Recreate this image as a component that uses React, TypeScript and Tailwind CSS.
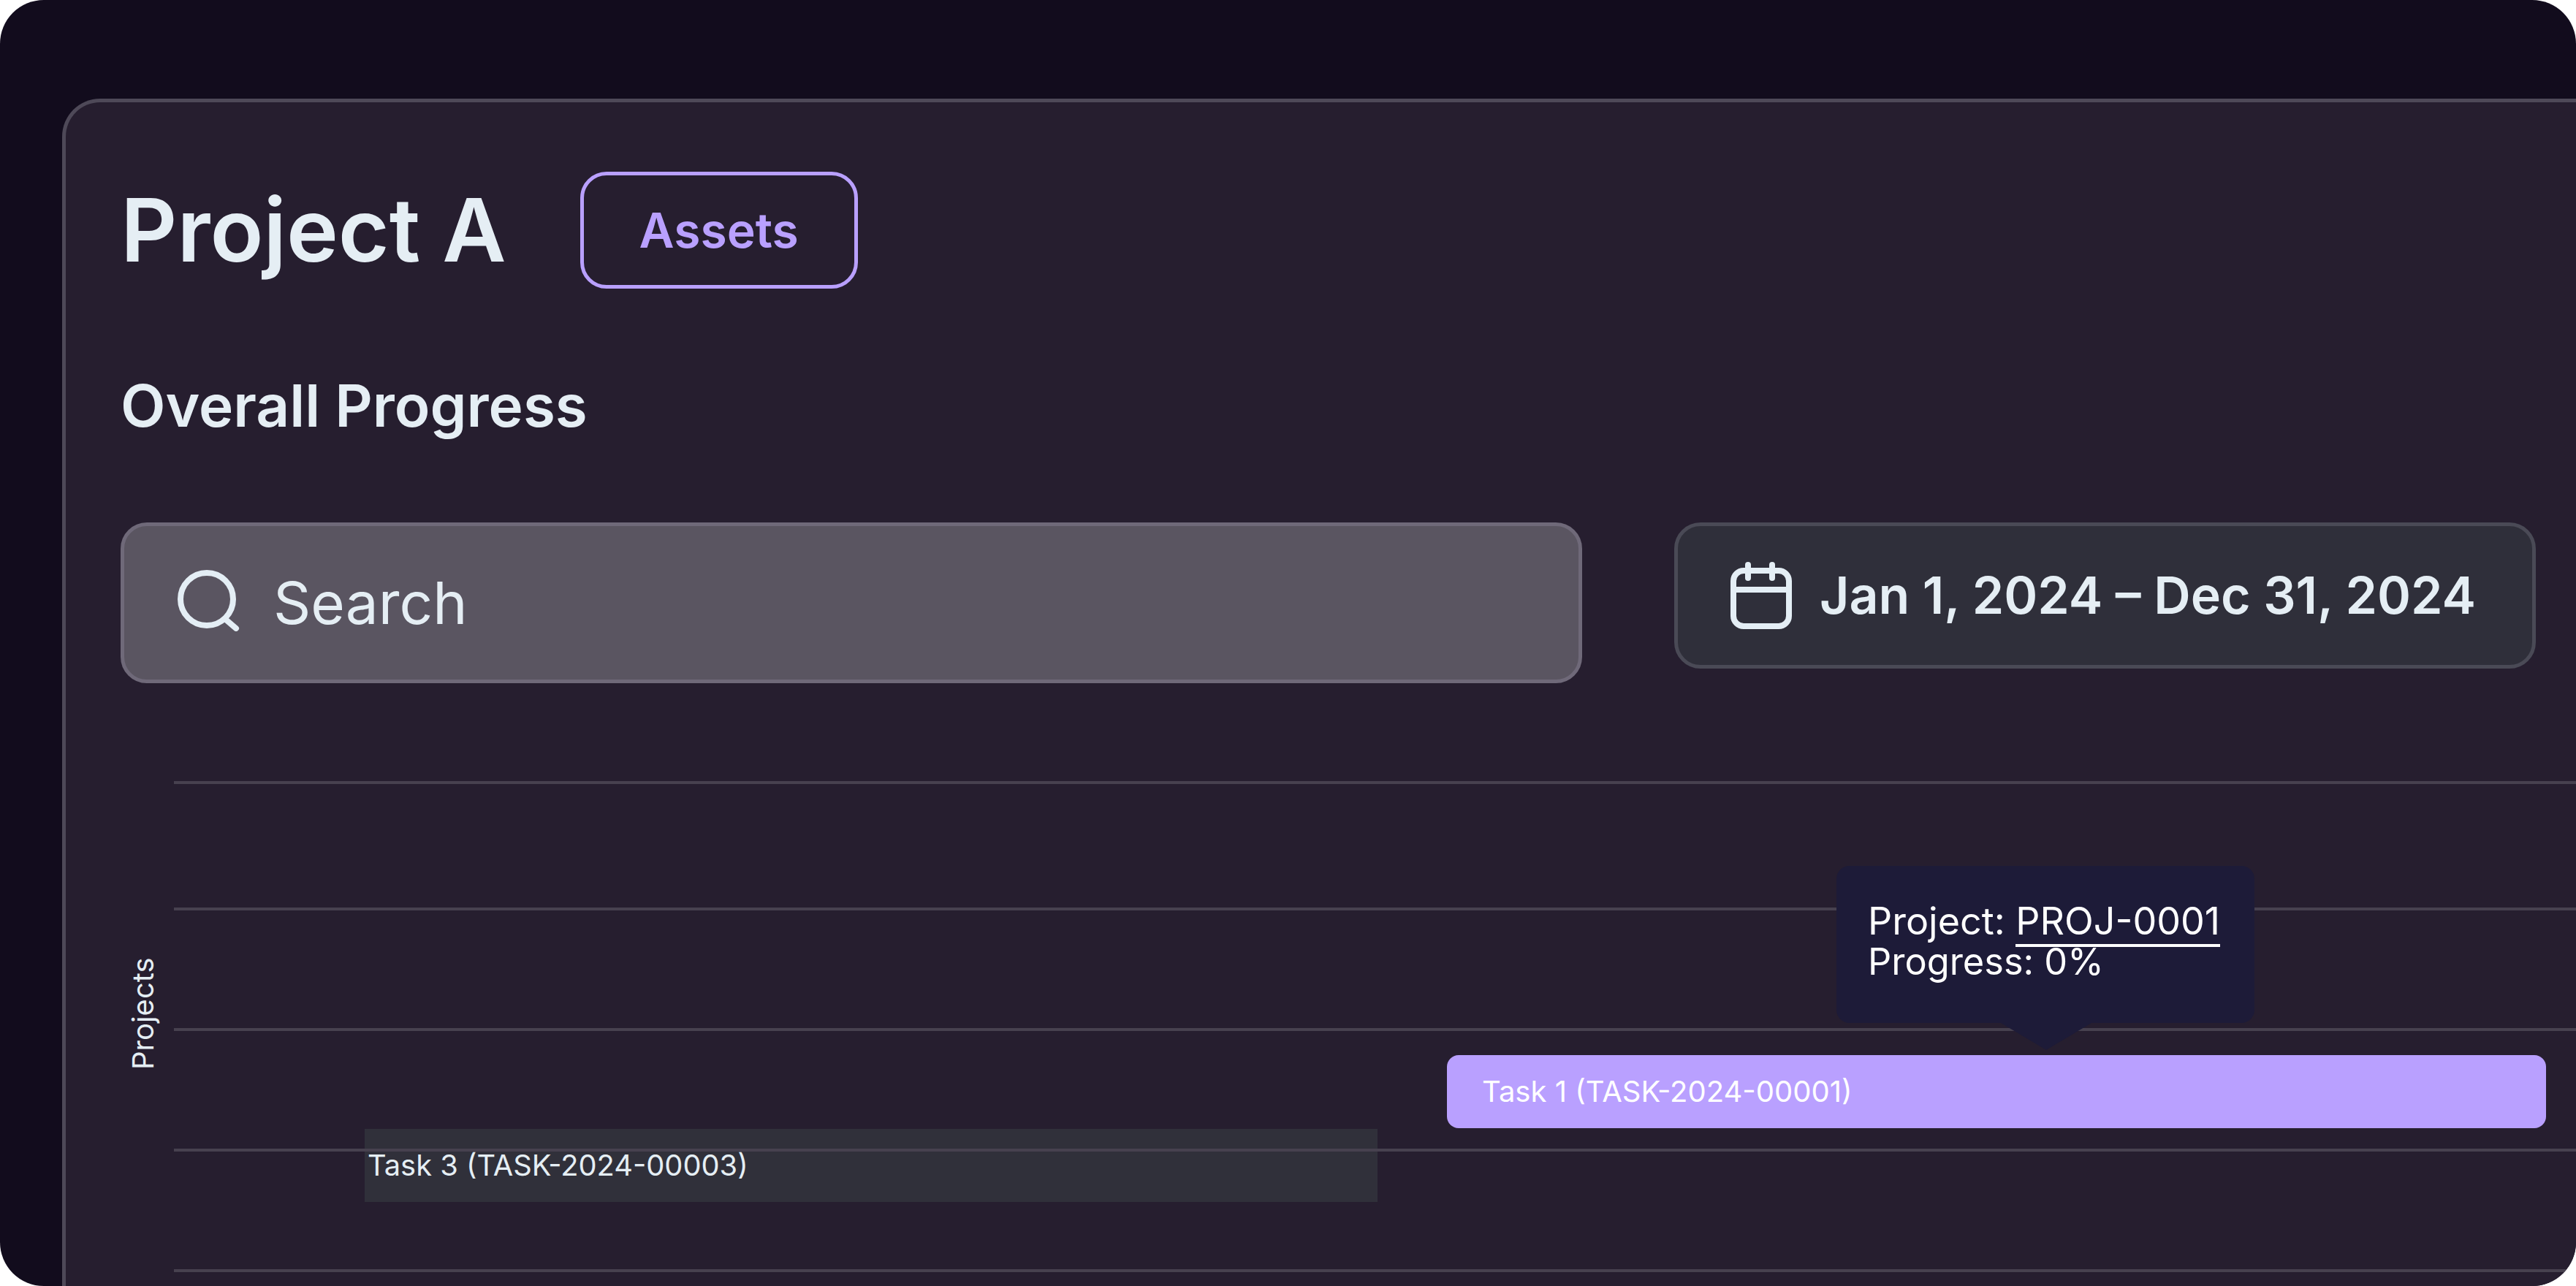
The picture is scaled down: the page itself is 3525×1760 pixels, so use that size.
const font = { fontFamily: "Inter, 'Noto Sans', sans-serif" };

const SearchIcon = () => (
  <svg viewBox="0 0 85 84" className="w-[85px] h-[84px] shrink-0 -mt-[6px]" fill="none" stroke="#E4EEF5" strokeWidth="8" strokeLinecap="round">
    <circle cx="40" cy="40" r="36" />
    <path d="M66 68 L80 80" />
  </svg>
);

const CalendarIcon = () => (
  <svg viewBox="0 0 84 92" className="w-[84px] h-[92px] shrink-0" fill="none" stroke="#E4EEF5" strokeWidth="8" strokeLinecap="round">
    <rect x="4" y="12" width="76" height="76" rx="14" />
    <path d="M4 38 H80" />
    <path d="M24 4 V22" />
    <path d="M57 4 V22" />
  </svg>
);

export default function App() {
  return (
    <div className="w-[3525px] h-[1760px] bg-white overflow-hidden" style={font}>
      <div className="h-full rounded-[60px] bg-[#120c1d] pl-[85px] pt-[135px] overflow-hidden">
        <div className="h-[1700px] rounded-tl-[52px] border-l-[5px] border-t-[5px] border-[#4e4958] bg-[#261e2f] pl-[75px] pt-[95px]">
          <div className="flex items-center h-[160px]">
            <h1 className="text-[120px] leading-none font-semibold text-[#e5eef4]">Project A</h1>
            <button className="ml-[101px] w-[380px] h-[160px] rounded-[36px] border-[5px] border-[#b9a0ff] text-[66px] font-semibold text-[#b9a0ff]">
              Assets
            </button>
          </div>

          <h2 className="mt-[114px] text-[80px] leading-[92px] font-semibold text-[#e5eef4]">Overall Progress</h2>

          <div className="mt-[114px] flex items-start gap-[126px]">
            <div className="w-[2000px] h-[220px] rounded-[36px] border-[5px] border-[#6f6979] bg-[#5a5561] flex items-center pl-[73px] gap-[46px]">
              <SearchIcon />
              <span className="text-[80px] font-normal text-[#e5eef4]">Search</span>
            </div>
            <div className="w-[1179px] h-[200px] rounded-[36px] border-[5px] border-[#4a4a56] bg-[#2f2f3a] flex items-center pl-[72px] gap-[38px]">
              <CalendarIcon />
              <span className="text-[69.8px] font-semibold text-[#e5eef4] whitespace-nowrap">Jan 1, 2024 – Dec 31, 2024</span>
            </div>
          </div>

          <div className="relative mt-[134px] ml-[73px] h-[680px] flex flex-col gap-[161px]">
            <div className="h-[4px] mb-[8px] bg-[#47414f]" />
            <div className="h-[4px] bg-[#47414f]" />
            <div className="h-[4px] bg-[#47414f]" />
            <div className="h-[4px] bg-[#47414f] relative z-10" />
            <div className="h-[4px] bg-[#47414f]" />

            <span className="absolute left-[-62px] top-[242px] h-[153px] [writing-mode:vertical-rl] rotate-180 text-[40px] leading-none text-[#e5eef4]">
              Projects
            </span>

            <div className="absolute left-[261px] top-[476px] w-[1386px] h-[100px] bg-[#30303a] flex items-center pl-[4px] text-[39.8px] text-[#e5eef4]">
              Task 3 (TASK-2024-00003)
            </div>

            <div className="absolute left-[1742px] top-[375px] w-[1504px] h-[100px] rounded-[16px] bg-[#b9a0ff] flex items-center pl-[48px] text-[40px] text-white">
              Task 1 (TASK-2024-00001)
            </div>

            <div className="absolute z-20 left-[2275px] top-[116px] w-[572px] h-[215px] rounded-[18px] bg-[#1d1b38] pl-[43px] pt-[48px] text-[52px] leading-[55px] font-normal text-white">
              <div>
                Project: <span className="border-b-[4px] border-white">PROJ-0001</span>
              </div>
              <div className="text-[50.5px]">Progress: 0%</div>
            </div>
            <div className="absolute z-20 left-[2500px] top-[331px] w-0 h-0 border-x-[62px] border-x-transparent border-t-[37px] border-t-[#1d1b38]" />
          </div>
        </div>
      </div>
    </div>
  );
}
